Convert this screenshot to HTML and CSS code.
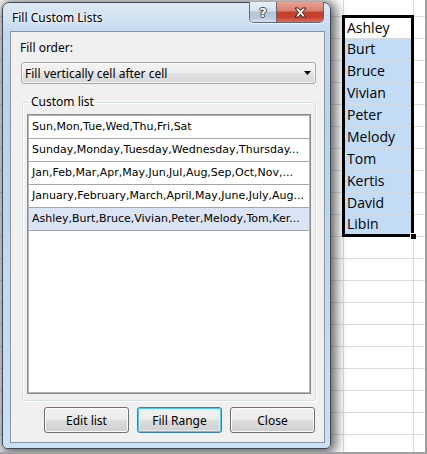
FILE: index.html
```html
<!DOCTYPE html>
<html lang="en">
<head>
<meta charset="utf-8">
<title>Fill Custom Lists</title>
<link rel="stylesheet" href="styles.css">
</head>
<body>
<div class="sheet">
  <section class="dialog">
    <header class="titlebar">
      <span class="title">Fill Custom Lists</span>
      <div class="caption-btns">
        <span class="cap-btn help">?</span>
        <span class="cap-btn close">
          <svg width="15" height="11" viewBox="0 0 15 11"><path d="M2 1h3.4l2.1 2.6 2.1-2.6h3.4l-3.7 4.5 3.7 4.5h-3.4l-2.1-2.6-2.1 2.6h-3.4l3.7-4.5z" fill="#fff" stroke="#3f1610" stroke-width="1" stroke-linejoin="round"/></svg>
        </span>
      </div>
    </header>
    <div class="client">
      <div class="label">Fill order:</div>
      <div class="combo">
        <span>Fill vertically cell after cell</span>
        <svg class="arrow" width="7" height="4" viewBox="0 0 7 4"><path d="M0 0h7L3.5 4z" fill="#000"/></svg>
      </div>
      <fieldset class="group">
        <legend>Custom list</legend>
        <ul class="list">
          <li>Sun,Mon,Tue,Wed,Thu,Fri,Sat</li>
          <li>Sunday,Monday,Tuesday,Wednesday,Thursday...</li>
          <li>Jan,Feb,Mar,Apr,May,Jun,Jul,Aug,Sep,Oct,Nov,...</li>
          <li>January,February,March,April,May,June,July,Aug...</li>
          <li class="selected">Ashley,Burt,Bruce,Vivian,Peter,Melody,Tom,Ker...</li>
        </ul>
      </fieldset>
      <div class="actions">
        <button class="btn">Edit list</button>
        <button class="btn default">Fill Range</button>
        <button class="btn">Close</button>
      </div>
    </div>
  </section>
  <div class="range">
    <div class="cell first">Ashley</div>
    <div class="cell sel">Burt</div>
    <div class="cell sel">Bruce</div>
    <div class="cell sel">Vivian</div>
    <div class="cell sel">Peter</div>
    <div class="cell sel">Melody</div>
    <div class="cell sel">Tom</div>
    <div class="cell sel">Kertis</div>
    <div class="cell sel">David</div>
    <div class="cell sel last">Libin</div>
    <span class="handle"></span>
  </div>
</div>
</body>
</html>
```

FILE: styles.css
```css
html, body {
  margin: 0;
  padding: 0;
}

body {
  width: 425px;
  height: 452px;
  border-right: 2px solid #a0a0a0;
  border-bottom: 2px solid #a0a0a0;
  overflow: hidden;
  background: #fff;
}

.sheet {
  height: 452px;
  display: flex;
  align-items: flex-start;
  background-image:
    linear-gradient(to right, transparent 343px, #dadcdd 343px, #dadcdd 344px, transparent 344px, transparent 413px, #dadcdd 413px, #dadcdd 414px, transparent 414px),
    repeating-linear-gradient(to bottom, transparent 0, transparent 16px, #dadcdd 16px, #dadcdd 17px, transparent 17px, transparent 22px);
}

/* ---------- dialog ---------- */
.dialog {
  margin: 2px 0 0 2px;
  width: 315px;
  padding: 0 5px 5px 7px;
  border: 1px solid #3e4857;
  border-radius: 7px 7px 5px 5px;
  background: linear-gradient(to bottom, #dde9f6 0, #d2e2f2 14px, #c3d8ee 30px, #bad3eb 120px, #c4daf0 320px, #cde0f4 447px);
  box-shadow: 2px 2px 12px 3px rgba(0, 0, 0, 0.62);
  font-family: "Noto Sans", "Open Sans", sans-serif;
  font-size: 12px;
  color: #000;
}

.titlebar {
  height: 28px;
  display: flex;
  justify-content: space-between;
  align-items: flex-start;
}

.title {
  padding: 7px 0 0 2px;
  line-height: 15px;
  font-size: 12px;
  text-shadow: 0 0 6px #fff, 0 0 3px #fff;
}

.caption-btns {
  display: flex;
  margin: -1px 1px 0 0;
  height: 20px;
  border: 1px solid #5d6a7a;
  border-top: 0;
  border-radius: 0 0 5px 5px;
  overflow: hidden;
  box-shadow: 0 1px 0 rgba(255, 255, 255, 0.7);
}

.cap-btn {
  display: flex;
  align-items: center;
  justify-content: center;
  height: 20px;
}

.help {
  width: 26px;
  border-right: 1px solid #5d6a7a;
  background: linear-gradient(to bottom, #e9f0f7 0, #d6e1ec 45%, #b3c4d6 50%, #bccbdc 80%, #d4e0ec 100%);
  color: #fff;
  font-family: "DejaVu Sans", sans-serif;
  font-weight: bold;
  font-size: 13px;
  text-shadow: 1px 0 0 #3b4552, -1px 0 0 #3b4552, 0 1px 0 #3b4552, 0 -1px 0 #3b4552;
}

.close {
  width: 46px;
  background: linear-gradient(to bottom, #e7a192 0, #d9806f 45%, #c23f2c 50%, #c6402f 75%, #d9705a 100%);
}

.client {
  box-sizing: border-box;
  height: 412px;
  border: 1px solid #8695a7;
  background: #f0f0f0;
  padding: 8px 8px 9px 9px;
  display: flex;
  flex-direction: column;
}

.label {
  line-height: 16px;
}

.combo {
  margin: 6px 0 0 1px;
  height: 22px;
  box-sizing: border-box;
  border: 1px solid #a7a7a7;
  border-radius: 3px;
  background: linear-gradient(to bottom, #f4f4f4 0, #ededed 50%, #e1e1e1 50%, #d8d8d8 100%);
  box-shadow: inset 0 0 0 1px rgba(255, 255, 255, 0.7);
  display: flex;
  align-items: center;
  justify-content: space-between;
  padding: 0 4px 0 3px;
}

.group {
  margin: 10px 0 0 2px;
  padding: 4px 4px 6px 4px;
  border: 1px solid #d5dfe5;
  border-radius: 3px;
  box-shadow: inset 1px 1px 0 #fff, 1px 1px 0 #fff;
  min-width: 0;
}

.group legend {
  margin-left: 2px;
  padding: 0 2px;
  line-height: 16px;
}

.list {
  margin: 0;
  padding: 0;
  list-style: none;
  height: 280px;
  box-sizing: border-box;
  border: 1px solid #8b8b8b;
  box-shadow: inset 0 0 0 1px #b4b4b4;
  background: #fff;
  font-family: "DejaVu Sans", sans-serif;
  font-size: 11px;
}

.list li {
  margin: 0 1px;
  height: 22px;
  line-height: 22px;
  border-bottom: 1px solid #a5a5a5;
  padding-left: 3px;
  white-space: nowrap;
  overflow: hidden;
}

.list li:first-child {
  margin-top: 1px;
}

.list li.selected {
  background: #dbe4f4;
}

.actions {
  margin-top: 6px;
  display: flex;
  justify-content: flex-end;
  gap: 8px;
  padding-right: 1px;
}

.btn {
  width: 85px;
  height: 26px;
  margin: 0;
  padding: 0;
  border: 1px solid #707070;
  border-radius: 3px;
  background: linear-gradient(to bottom, #f2f2f2 0, #ebebeb 50%, #dddddd 50%, #cfcfcf 100%);
  box-shadow: inset 0 0 0 1px #fbfbfb;
  font-family: "Noto Sans", "Open Sans", sans-serif;
  font-size: 12px;
  color: #000;
}

.btn.default {
  border-color: #3c7fb1;
  box-shadow: inset 0 0 0 1px #49cbf5, inset 0 0 0 2px rgba(255, 255, 255, 0.5);
}

/* ---------- spreadsheet range ---------- */
.range {
  position: relative;
  margin: 15px 0 0 11px;
  width: 66px;
  border: 3px solid #000;
  font-family: "Open Sans", sans-serif;
  font-size: 14px;
  color: #000;
}

.cell {
  box-sizing: border-box;
  height: 22px;
  border-top: 1px solid #d5dce4;
  padding-left: 2px;
  line-height: 20px;
}

.cell.first {
  height: 20px;
  border-top: 0;
  background: #fff;
  line-height: 19px;
}

.cell.sel {
  background: #c3dcf6;
}

.cell.last {
  height: 20px;
  line-height: 18px;
}

.handle {
  position: absolute;
  right: -5px;
  bottom: -5px;
  width: 5px;
  height: 5px;
  background: #000;
  border: 1px solid #fff;
  border-width: 1px 0 0 1px;
}
```
